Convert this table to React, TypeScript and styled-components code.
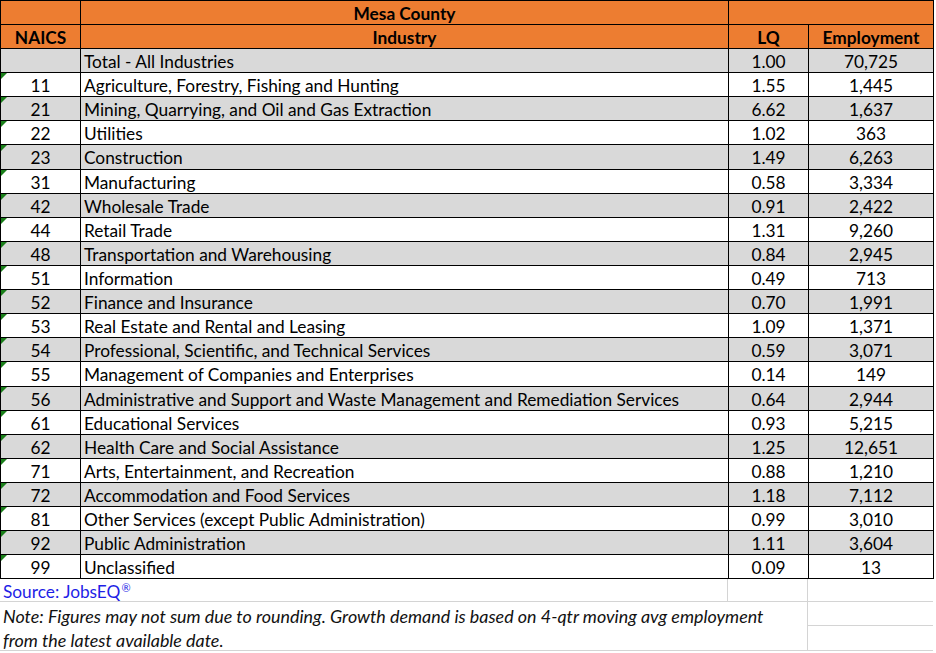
import React from "react";
import styled, { createGlobalStyle, css } from "styled-components";

const Global = createGlobalStyle`
  html, body { margin: 0; padding: 0; background: #ffffff; }
  body { font-family: "Lato", "Liberation Sans", sans-serif; }
`;

const COLS = "80px 648px 80px 125px";

const Sheet = styled.div`
  width: 936px;
  font-family: "Lato", "Liberation Sans", sans-serif;
  font-size: 17.3px;
  color: #000;
`;

const Grid = styled.div`
  display: grid;
  grid-template-columns: ${COLS};
  border-top: 1px solid #000;
  border-left: 1px solid #000;
  width: 934px;
  box-sizing: border-box;
`;

const Cell = styled.div<{ $align?: "left" | "center"; $bg?: string; $bold?: boolean; $h?: number; $span?: number; $flag?: boolean }>`
  position: relative;
  box-sizing: border-box;
  height: ${(p) => p.$h ?? 24}px;
  border-right: 1px solid #000;
  border-bottom: 1px solid #000;
  background: ${(p) => p.$bg ?? "#fff"};
  display: flex;
  align-items: center;
  justify-content: ${(p) => (p.$align === "left" ? "flex-start" : "center")};
  padding: 1px 3px 0 3px;
  white-space: nowrap;
  overflow: hidden;
  font-weight: ${(p) => (p.$bold ? 700 : 400)};
  ${(p) => p.$span && css`grid-column: span ${p.$span};`}
  ${(p) =>
    p.$flag &&
    css`
      &::before {
        content: "";
        position: absolute;
        left: 0;
        top: 0;
        width: 0;
        height: 0;
        border-top: 6px solid #1a7f1a;
        border-right: 6px solid transparent;
      }
    `}
`;

const Footer = styled.div`
  display: grid;
  grid-template-columns: 728px 80px 125px;
  grid-template-rows: 23px 24px 25px;
  width: 933px;
`;

const FootCell = styled.div<{ $row: string; $col: string; $right?: boolean }>`
  grid-row: ${(p) => p.$row};
  grid-column: ${(p) => p.$col};
  border-bottom: 1px solid #d4d4d4;
  ${(p) => p.$right && css`border-right: 1px solid #d4d4d4;`}
  box-sizing: border-box;
`;

const SourceText = styled(FootCell)`
  color: #1f1fe6;
  padding: 2px 0 0 3px;
  display: flex;
  align-items: center;
  border-right: 1px solid #d4d4d4;
`;

const Reg = styled.span`
  font-size: 11px;
  position: relative;
  top: -4px;
  margin-left: 1px;
`;

const NoteText = styled(FootCell)`
  font-style: italic;
  color: #111;
  line-height: 24px;
  padding: 2px 0 0 3px;
  font-size: 17.9px;
  white-space: nowrap;
`;

type Row = [string, string, string, string];

const rows: Row[] = [
  ["", "Total - All Industries", "1.00", "70,725"],
  ["11", "Agriculture, Forestry, Fishing and Hunting", "1.55", "1,445"],
  ["21", "Mining, Quarrying, and Oil and Gas Extraction", "6.62", "1,637"],
  ["22", "Utilities", "1.02", "363"],
  ["23", "Construction", "1.49", "6,263"],
  ["31", "Manufacturing", "0.58", "3,334"],
  ["42", "Wholesale Trade", "0.91", "2,422"],
  ["44", "Retail Trade", "1.31", "9,260"],
  ["48", "Transportation and Warehousing", "0.84", "2,945"],
  ["51", "Information", "0.49", "713"],
  ["52", "Finance and Insurance", "0.70", "1,991"],
  ["53", "Real Estate and Rental and Leasing", "1.09", "1,371"],
  ["54", "Professional, Scientific, and Technical Services", "0.59", "3,071"],
  ["55", "Management of Companies and Enterprises", "0.14", "149"],
  ["56", "Administrative and Support and Waste Management and Remediation Services", "0.64", "2,944"],
  ["61", "Educational Services", "0.93", "5,215"],
  ["62", "Health Care and Social Assistance", "1.25", "12,651"],
  ["71", "Arts, Entertainment, and Recreation", "0.88", "1,210"],
  ["72", "Accommodation and Food Services", "1.18", "7,112"],
  ["81", "Other Services (except Public Administration)", "0.99", "3,010"],
  ["92", "Public Administration", "1.11", "3,604"],
  ["99", "Unclassified", "0.09", "13"],
];

const ORANGE = "#ed7d31";
const GRAY = "#d9d9d9";

export default function App() {
  return (
    <>
      <Global />
      <Sheet>
        <Grid>
          <Cell $bg={ORANGE} />
          <Cell $bg={ORANGE} $bold>Mesa County</Cell>
          <Cell $bg={ORANGE} $span={2} />
          <Cell $bg={ORANGE} $bold>NAICS</Cell>
          <Cell $bg={ORANGE} $bold>Industry</Cell>
          <Cell $bg={ORANGE} $bold>LQ</Cell>
          <Cell $bg={ORANGE} $bold>Employment</Cell>
          {rows.map((r, i) => {
            const bg = i % 2 === 0 ? GRAY : "#fff";
            const h = r[0] === "23" || r[0] === "55" ? 25 : 24;
            return (
              <React.Fragment key={i}>
                <Cell $bg={bg} $h={h} $flag={r[0] !== ""}>{r[0]}</Cell>
                <Cell $bg={bg} $h={h} $align="left">{r[1]}</Cell>
                <Cell $bg={bg} $h={h}>{r[2]}</Cell>
                <Cell $bg={bg} $h={h}>{r[3]}</Cell>
              </React.Fragment>
            );
          })}
        </Grid>
        <Footer>
          <SourceText $row="1" $col="1">
            Source: JobsEQ<Reg>®</Reg>
          </SourceText>
          <FootCell $row="1" $col="2" $right />
          <FootCell $row="1" $col="3" />
          <NoteText $row="2 / span 2" $col="1 / span 2" $right>
            Note: Figures may not sum due to rounding. Growth demand is based on 4-qtr moving avg employment
            <br />
            from the latest available date.
          </NoteText>
          <FootCell $row="2" $col="3" />
          <FootCell $row="3" $col="3" />
        </Footer>
      </Sheet>
    </>
  );
}
